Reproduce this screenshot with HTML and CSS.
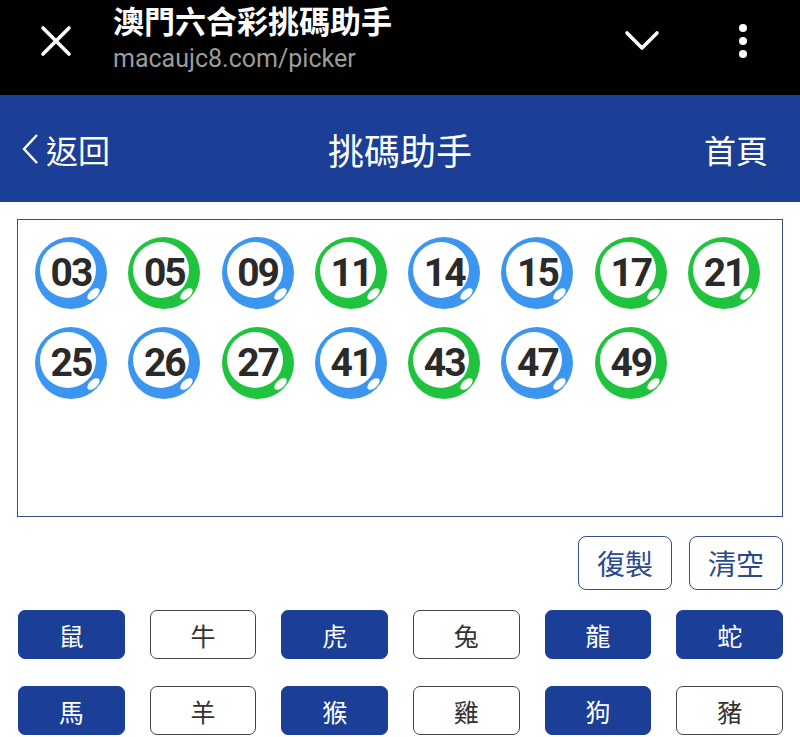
FILE: index.html
```html
<!DOCTYPE html>
<html>
<head>
    <title>澳門六合彩挑碼助手</title>
    <link rel="stylesheet" href="styles.css">
</head>
<body>
    <div class="topbar">
        <svg class="close-icon" width="32" height="32" viewBox="0 0 32 32">
            <path d="M3 3 L29 29 M29 3 L3 29" stroke="#fff" stroke-width="3.6" stroke-linecap="round"/>
        </svg>
        <div class="tab-info">
            <div class="tab-title">澳門六合彩挑碼助手</div>
            <div class="tab-url">macaujc8.com/picker</div>
        </div>
        <svg class="down-icon" width="36" height="22" viewBox="0 0 36 22">
            <path d="M3 3 L18 18 L33 3" stroke="#fff" stroke-width="3.6" fill="none" stroke-linecap="round" stroke-linejoin="round"/>
        </svg>
        <svg class="more-icon" width="10" height="36" viewBox="0 0 10 36">
            <circle cx="5" cy="5" r="4" fill="#fff"/>
            <circle cx="5" cy="18" r="4" fill="#fff"/>
            <circle cx="5" cy="31" r="4" fill="#fff"/>
        </svg>
    </div>

    <div class="header">
        <a class="back">
            <svg width="20" height="30" viewBox="0 0 20 30">
                <path d="M17 1 L4 15 L17 29" stroke="#fff" stroke-width="2.4" fill="none"/>
            </svg>
            返回
        </a>
        <h1>挑碼助手</h1>
        <a class="home">首頁</a>
    </div>

    <div class="picked">
        <span class="ball blue">03</span>
        <span class="ball green">05</span>
        <span class="ball blue">09</span>
        <span class="ball green">11</span>
        <span class="ball blue">14</span>
        <span class="ball blue">15</span>
        <span class="ball green">17</span>
        <span class="ball green">21</span>
        <span class="ball blue">25</span>
        <span class="ball blue">26</span>
        <span class="ball green">27</span>
        <span class="ball blue">41</span>
        <span class="ball green">43</span>
        <span class="ball blue">47</span>
        <span class="ball green">49</span>
    </div>

    <div class="actions">
        <button class="action">復製</button>
        <button class="action">清空</button>
    </div>

    <div class="zodiac">
        <button class="zz on">鼠</button>
        <button class="zz">牛</button>
        <button class="zz on">虎</button>
        <button class="zz">兔</button>
        <button class="zz on">龍</button>
        <button class="zz on">蛇</button>
        <button class="zz on">馬</button>
        <button class="zz">羊</button>
        <button class="zz on">猴</button>
        <button class="zz">雞</button>
        <button class="zz on">狗</button>
        <button class="zz">豬</button>
    </div>
</body>
</html>
```

FILE: styles.css
```css
body {
    margin: 0;
    background: #fff;
    font-family: "Noto Sans CJK TC", "Noto Sans", sans-serif;
    overflow: hidden;
}

/* browser tab bar */
.topbar {
    height: 95px;
    background: #000;
    display: flex;
    align-items: center;
    color: #fff;
}

.close-icon {
    margin-left: 40px;
    margin-top: -14px;
}

.tab-info {
    margin-left: 41px;
    flex: 1;
    align-self: flex-start;
    padding-top: 2px;
}

.tab-title {
    font-size: 31px;
    font-weight: bold;
    line-height: 36px;
}

.tab-url {
    font-family: Roboto, sans-serif;
    font-size: 25px;
    color: #9b9b9b;
    line-height: 30px;
    margin-top: 6px;
}

.down-icon {
    margin-right: 78px;
    margin-top: -14px;
}

.more-icon {
    margin-right: 52px;
    margin-top: -14px;
}

/* page header */
.header {
    height: 107px;
    background: #1b3f96;
    color: #fff;
    display: grid;
    grid-template-columns: 1fr auto 1fr;
    align-items: center;
    padding: 0 32px 0 20px;
}

.header h1 {
    font-size: 36px;
    font-weight: normal;
    margin: 0 0 0 12px;
}

.back, .home {
    font-size: 32px;
    display: flex;
    align-items: center;
}

.home {
    justify-content: flex-end;
}

.back svg {
    margin-right: 6px;
}

/* picked numbers */
.picked {
    margin: 17px 17px 0;
    height: 298px;
    box-sizing: border-box;
    border: 1.5px solid #34508c;
    padding: 17px 0 0 17px;
    display: flex;
    flex-wrap: wrap;
    align-content: flex-start;
    column-gap: 21.3px;
    row-gap: 18px;
}

.ball {
    position: relative;
    width: 72px;
    height: 72px;
    border-radius: 50%;
    display: flex;
    align-items: center;
    justify-content: center;
    font-family: Roboto, sans-serif;
    font-weight: bold;
    font-size: 39px;
    letter-spacing: -2px;
    color: #2a2a2a;
    z-index: 0;
}

.ball::before {
    content: "";
    position: absolute;
    left: 5px;
    top: 5px;
    width: 56px;
    height: 56px;
    border-radius: 50%;
    background: #fff;
    z-index: -1;
}

.ball::after {
    content: "";
    position: absolute;
    left: 51px;
    top: 53px;
    width: 15px;
    height: 8px;
    border-radius: 50%;
    background: #fff;
    transform: rotate(-42deg);
}

.blue {
    background: #3c95ef;
}

.green {
    background: #1fc33d;
}

/* copy / clear */
.actions {
    display: flex;
    justify-content: flex-end;
    gap: 17px;
    margin: 19px 17px 0;
}

.action {
    width: 94px;
    height: 54px;
    background: #fff;
    border: 1.5px solid #34508c;
    border-radius: 8px;
    color: #2b4a8e;
    font-family: "Noto Sans CJK TC", sans-serif;
    font-size: 28px;
    padding: 0;
}

/* zodiac */
.zodiac {
    display: grid;
    grid-template-columns: repeat(6, 1fr);
    column-gap: 25px;
    row-gap: 27px;
    margin: 20px 17px 0 18px;
}

.zz {
    height: 49px;
    border: 1.5px solid #444;
    border-radius: 7px;
    background: #fff;
    color: #333;
    font-family: "Noto Sans CJK TC", sans-serif;
    font-size: 25px;
    padding: 0;
}

.zz.on {
    background: #1b3f96;
    border-color: #1b3f96;
    color: #fff;
}
```
